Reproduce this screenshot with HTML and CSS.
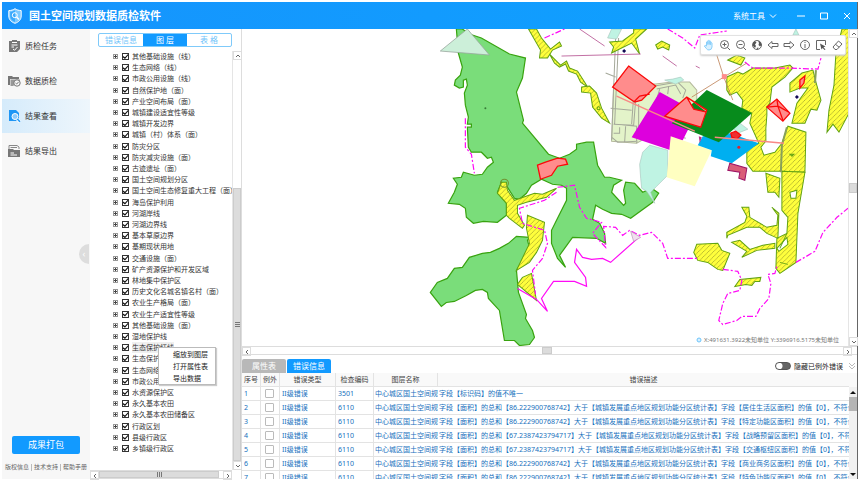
FILE: index.html
```html
<!DOCTYPE html>
<html lang="zh-CN">

<head>
    <meta charset="UTF-8">
    <meta name="viewport" content="width=device-width, initial-scale=1.0">
    <title>国土空间规划数据质检软件</title>
    <link rel="stylesheet" href="styles.css">
</head>

<body>
    <div class="app">
        <header class="titlebar">
            <svg class="logo" viewBox="0 0 14 16">
                <path d="M7 .7 C5.400 1.900 3.200 2.500 .8 2.600 V8 C.8 11.500 3 14 7 15.300 C11 14 13.200 11.500 13.200 8 V2.600 C10.800 2.500 8.600 1.900 7 .7Z" fill="#7cc9ff" stroke="#fff" />
                <path d="M7 2.200 C5.700 3.100 4 3.700 2.200 3.800 V8 C2.200 10.800 4 12.800 7 13.900Z" fill="#3aa9fb" />
                <circle cx="6.800" cy="7.200" r="2.500" fill="none" stroke="#fff" />
                <path d="M8.600 9 L11 11.500" stroke="#fff" stroke-width="1.400" />
            </svg>
            <h1>国土空间规划数据质检软件</h1>
            <button class="system-menu">系统工具
                <svg viewBox="0 0 8 8"><path d="M1 2.500 L4 5.500 L7 2.500" /></svg>
            </button>
            <div class="window-buttons">
                <button aria-label="最小化"><svg viewBox="0 0 10 10"><path d="M1 5 H9" /></svg></button>
                <button aria-label="最大化"><svg viewBox="0 0 10 10"><path d="M1.500 2 H8.500 V8 H1.500Z" /></svg></button>
                <button aria-label="关闭"><svg viewBox="0 0 10 10"><path d="M2 2 L8 8 M8 2 L2 8" /></svg></button>
            </div>
        </header>

        <div class="main">
            <aside class="sidebar">
                <nav>
                    <a href="#task">
                        <svg viewBox="0 0 13 14">
                            <path d="M1 2 H4 V1 H9 V2 H12 V10 L9 13 H1Z" fill="#777" />
                            <path d="M4 3.500 H9 M3.500 6 H9.500 M3.500 8 H6 M5 10 L6.500 11.300 L9.500 8" fill="none" stroke="#fff" />
                        </svg>
                        质检任务
                    </a>
                    <a href="#check">
                        <svg viewBox="0 0 13 14">
                            <path d="M0 2 H4 L5 3 H11 V5 H2 V11 H0Z" fill="#777" />
                            <path d="M2.500 5.500 H12 V7 H7 L5.500 12 H2.500Z" fill="#999" />
                            <circle cx="9" cy="9" r="3.200" fill="#f7f7f7" stroke="#777" />
                            <path d="M7.500 9 L8.700 10 L10.700 7.800" fill="none" stroke="#777" />
                        </svg>
                        数据质检
                    </a>
                    <a href="#result" class="active">
                        <svg viewBox="0 0 13 14">
                            <path d="M1 1 H8 L11 4 V12 H1Z" fill="#1e96f5" />
                            <circle cx="7" cy="7.500" r="3" fill="#8fcbfb" stroke="#fff" />
                            <path d="M9 10 L12 13" stroke="#fff" stroke-width="3" />
                            <path d="M9.300 10 L12 12.800" stroke="#1e96f5" stroke-width="1.500" />
                        </svg>
                        结果查看
                    </a>
                    <a href="#export">
                        <svg viewBox="0 0 13 14">
                            <path d="M1 5 V1.500 H9 L11 3 V5" fill="none" stroke="#888" />
                            <path d="M2.500 3.500 H9" stroke="#888" />
                            <path d="M0 5 H5 L6 6 H12 V13 H0Z" fill="#777" />
                            <path d="M2.500 9 H6 M2.500 11 H9" stroke="#fff" />
                        </svg>
                        结果导出
                    </a>
                </nav>
                <button class="collapse" aria-label="收起">‹</button>
                <div class="sidebar-bottom">
                    <button class="pack">成果打包</button>
                    <p class="links"><a href="#copyright">版权信息</a><i></i><a href="#support">技术支持</a><i></i><a href="#help">帮助手册</a></p>
                </div>
            </aside>

            <section class="layers">
                <div class="switch">
                    <button>错误信息</button>
                    <button class="active">图 层</button>
                    <button>表 格</button>
                </div>
                <div class="tree-area">
                    <ul class="tree" id="tree"></ul>
                    <div class="scroll vertical">
                        <button aria-label="向上"><svg viewBox="0 0 8 8"><path d="M2 5 L4 3 L6 5" /></svg></button>
                        <span class="track tree-track"><span class="thumb"><i></i></span></span>
                        <button aria-label="向下"><svg viewBox="0 0 8 8"><path d="M2 3 L4 5 L6 3" /></svg></button>
                    </div>
                </div>
                <div class="scroll horizontal tree-bottom">
                    <button aria-label="向左"><svg viewBox="0 0 8 8"><path d="M5 2 L3 4 L5 6" /></svg></button>
                    <span class="track"><span class="thumb"><i></i></span></span>
                    <button aria-label="向右"><svg viewBox="0 0 8 8"><path d="M3 2 L5 4 L3 6" /></svg></button>
                </div>
            </section>

            <section class="content">
                <div class="map-area">
                    <div class="map">
                        <svg class="map-canvas" viewBox="243 29 605 317" preserveAspectRatio="xMinYMin slice">
                            <defs>
                                <pattern id="hatch" width="5" height="5" patternUnits="userSpaceOnUse">
                                    <rect width="5" height="5" fill="#ffff3c" />
                                    <path d="M-1 1 L1 -1 M-1 6 L6 -1 M4 6 L6 4" stroke="#b0b02c" stroke-width=".8" />
                                </pattern>
                            </defs>

                            <!-- protected areas -->
                            <g class="area-green">
                                <path d="M457 29 L459 53 L463 67 L461 75 L456 80 L455 85 L460 88 L464 87 L464 80 L467 79 L468 85 L465 93 L466 105 L469 117 L468 124 H472 V127 H468 L469 147 L472 152 H482 L488 158 L492 157 L494 162 L488 167 L483 174 L475 175 L464 172 L462 177 L454 178 L458 184 L455 192 L449 203 L460 204 L466 208 L467 217 L474 223 L484 221 L498 222 L507 215 L507 203 L498 192 L502 182 L508 187 L515 198 L520 199 L527 193 L532 185 L542 179 L553 184 L562 185 L567 188 V200 L558 218 L552 230 V243 L558 258 L566 267 L560 255 L573 237 L597 238 L606 243 L605 233 L600 223 L593 219 L596 205 L603 209 L612 213 L622 214 L631 218 L653 202 L659 193 L652 188 L643 192 L635 183 L626 182 L624 190 L626 203 L624 205 L612 192 L614 185 L622 180 L610 177 H605 L598 165 L594 142 L587 142 L577 144 V149 L570 154 L560 158 L549 154 L523 123 L524 120 L517 92 L523 78 L526 58 L510 54 L482 38 L470 34 L463 29Z" />
                                <path d="M530 237 L517 236 L509 243 L500 248 L491 252 L483 253 L470 257 L463 267 L455 268 L448 278 L438 282 L431 292 L442 306 L447 302 L455 301 L467 295 L476 290 L483 289 L488 292 L489 298 L500 310 L505 340 H515 L520 345 L530 344 L535 337 L533 330 L526 318 L527 314 L519 292 L517 270 L530 247 L528 240Z" />
                            </g>
                            <circle cx="486" cy="108" r="1" fill="#387c38" />

                            <!-- town blocks and roads -->
                            <path d="M614 84 L656 84 L672 82 L690 82 L697 90 L697 108 L687 130 L672 138 L660 130 L637 143 L612 141Z" fill="#e3f3c9" stroke="#b5b99d" />
                            <g class="road">
                                <path d="M616 38 L612 140 M619 38 L615 124 L637 126 V143 M606 73 L616 77 M614 124 L634 125 L636 100 M611 108 L632 110 M626 126 L625 142 M614 133 H620 V127 M655 86 L678 82 L686 90 L683 98 M657 89 L676 85 L681 94 M639 104 V126 L658 124 M660 89 L657 99 M669 86 L668 94 M612 137 L618 142 L638 141 M668 124 V133 L686 138 M634 96 L632 124" />
                            </g>
                            <g fill="#bff3e3" stroke="#a5c2bb" stroke-width=".6">
                                <path d="M608 38 L612 29 H622 L617 39Z" />
                                <path d="M665 80 L673 79 L681 77 L684 80 L676 84Z" />
                                <path d="M650 145 L668 150 V175 L657 186 L651 192 L655 203 L647 191 L642 188 L641 178 L640 164 L643 152Z" />
                                <path d="M733 128 L740 123 L748 129 L738 133Z" />
                                <path d="M793 35 L796 29 L799 35Z" />
                            </g>
                            <path d="M468 29 L490 55 L441 51Z" fill="#ccefd9" stroke="#9aa79f" stroke-width=".8" />

                            <!-- farmland -->
                            <g class="area-yellow">
                                <path d="M502 182 L507 182 L508 190 L515 200 L535 193 L543 194 L557 188 L547 197 L527 202 L518 205 V213 L525 225 L523 228 L510 218 L507 215 V203 L498 193Z" />
                                <path d="M528 215 L545 222 L543 240 L537 252 L530 262 L517 270 L530 243 L527 228Z" />
                                <path d="M532 273 L537 300 L518 284 L523 277Z" />
                                <path d="M529 29 H537 L542 38 L551 49 L560 42 L562 46 L553 50 L548 58 H540 L541 50Z" />
                                <path d="M550 54 L557 61 L561 65 L567 61 L570 68 L578 71 L585 82 L588 87 L581 82 L577 74 L569 71 L566 64 L560 67 L555 63Z" />
                                <path d="M582 87 L590 86 L597 93 L602 108 L610 123 L602 118 L593 107 L591 93 L582 92Z" />
                                <path d="M610 42 L623 41 L634 33 V29 H647 L636 39 L640 54 L632 43 L620 49 L612 53 L614 47Z" />
                                <path d="M656 45 L662 41 L670 45 L669 50 L663 47 L658 49Z" />
                                <path d="M728 60 L737 55 L745 58 L741 65Z" />
                                <path d="M727 77 L738 72 L743 74 L753 68 L775 68 L790 65 L793 68 L785 77 L772 87 L770 103 L767 107 V115 L766 128 L766 141 L761 147 L764 155 L775 152 L782 143 L788 126 L806 132 L805 172 L782 171 L753 171 L747 163 V150 L759 143 L750 123 L752 113 L742 108 L743 100 L737 92 L730 95 L727 90Z" />
                                <path d="M790 83 L802 73 L813 70 L816 82 L821 100 L817 110 L811 109 L805 123 L792 123 L797 103 L808 88 L800 88 L790 92Z" />
                                <path d="M842 29 H849 V113 L839 132 L833 124 L827 132 L829 110 L834 85 L836 52Z" />
                                <path d="M782 171 L805 172 L798 213 L796 262 L780 273 L776 268 L777 238 L787 233 L788 217 L782 210Z" />
                                <path d="M766 173 L780 178 L779 197 L775 192 L768 192Z" />
                                <path d="M742 207 L749 207 L750 217 L767 227 L777 225 L778 215 L772 207 L779 213 L778 238 L767 233 L760 227 L747 227 L728 235 L727 238 V232 L745 222 L747 216Z" />
                                <path d="M732 242 L740 240 L750 249 L763 245 L775 243 V248 L757 250 L742 257 L747 251Z" />
                                <path d="M697 244 L718 243 L722 250 L730 253 L723 270 L718 269 L708 262 L698 260 L694 252Z" />
                                <path d="M735 286 L740 279 L761 277 L760 281 L755 281 L752 285 L746 284Z" />
                            </g>
                            <g fill="#fff" stroke="#62a312">
                                <path d="M790 192 L797 190 L796 198 L791 198Z" />
                                <path d="M777 248 L787 237 L788 244 L779 251Z" />
                                <path d="M780 248 L787 233" />
                            </g>
                            <path d="M787 127 L782 145 L781 172 M816 70 L815 83" fill="none" stroke="#88a05a" stroke-width="2" />
                            <path d="M792 156 L790 154 L794 154Z M780 262 L788 264" fill="none" stroke="#62a312" />
                            <circle cx="505" cy="183" r="4" fill="none" stroke="#719331" />
                            <circle cx="599" cy="108" r="1.500" fill="none" stroke="#62a312" />

                            <!-- administrative boundaries -->
                            <g class="boundary dashed">
                                <path d="M668 29 L683 38 L695 48 L700 35 L727 31" />
                                <path d="M745 62 L753 68 L787 68 L818 69 L821 58" />
                                <path d="M545 38 L565 29" />
                                <path d="M466 118 V147 L472 154 L475 173" />
                                <path d="M557 192 L545 200 L520 208 L523 223 L545 230 L548 243 L543 258 L533 270 L536 294" />
                                <path d="M558 187 L575 185 L580 207 L587 218 L602 222 L593 233 L606 247 L604 226 L616 227 L623 235 L630 230 L640 235 L652 232 L663 243 L668 258 H698" />
                                <path d="M723 269 L738 271 L742 280 L740 290 L728 293 L723 303 L719 320 L723 324 L737 320 L742 316 H756 L760 308 L769 298 L771 283 L768 274 L775 273 L777 266" />
                                <path d="M796 262 L815 251 L823 232 L837 217 L848 208" />
                            </g>
                            <path class="boundary" d="M518 288 L537 299 L548 311 L542 298 L554 281 H575 L587 286 L586 277 L575 262 L577 249 L583 257 L592 259 L603 258 L611 262 L638 238" />
                            <path d="M631 231 L641 237 L634 241Z" fill="#f1dfef" stroke="#b89ab5" stroke-width=".7" />
                            <g fill="none" stroke="#b34c8d" stroke-width=".8">
                                <path d="M562 56 L641 54 M580 29 L605 46 M663 56 L677 66 M696 66 L700 68" />
                                <path d="M724 77 L717 55 M724 77 L747 63 M724 77 L692 97 M724 77 L733 100" stroke="#bd8054" />
                            </g>

                            <!-- planning zones -->
                            <path d="M660 92 L697 112 L688 130 L683 140 L671 150 L632 137Z" fill="#dd00dd" />
                            <path d="M671 136 L712 150 L695 186 L667 177Z" fill="#ffffc1" />
                            <path d="M730 133 L759 143 L732 163 L711 156 L712 150 L698 145 L703 136Z" fill="#00aff0" />
                            <path d="M707 90 L752 113 L719 142 L672 123Z" fill="#078b1c" />
                            <path d="M730 163 L747 168 L745 180 L739 178 L740 172 L728 170Z" fill="#d95d78" stroke="#9c1265" />
                            <path d="M699 136 L702 137 L700 143Z" fill="#b93484" />

                            <!-- error features -->
                            <g class="area-red">
                                <path d="M629 66 L656 86 L642 100 L635 102 L613 87Z M634 102 L640 96 L650 94" />
                                <path d="M687 97 L707 110 L701 127 L665 116Z M687 97 L694 109 L707 112" />
                                <path d="M777 99 L790 113 L783 121 L767 107Z" />
                                <path d="M777 99 L778 106 L789 112 M767 107 L778 106 L783 120" fill="none" />
                                <path d="M800 80 L805 76 L804 83 L800 88Z" />
                                <path d="M538 165 L546 162 L558 158 L566 159 L568 164 L558 166 L552 175 L541 179Z" />
                                <path d="M731 133 L736 131 L741 135 L737 139 L732 137Z" fill="#ef3030" />
                            </g>
                            <circle cx="739" cy="147" r="1.500" fill="#e2212c" />
                            <rect x="722" y="74" width="5" height="5" fill="#ff8d8d" />
                            <path d="M617 96 L695 131 M715 137 L784 143" stroke="#f88885" stroke-width="1.500" />
                            <path d="M624.500 49 L626.500 51 L624.500 53 L622.500 51Z M797 95 L799 97 L797 99 L795 97Z" fill="#120a55" />
                        </svg>

                        <div class="map-tools">
                            <button class="active" aria-label="平移"><svg viewBox="0 0 12 12"><path d="M3.500 7 V3 Q4.200 2 4.800 3 V5.500 V1.800 Q5.500 1 6.200 1.800 V5.500 V2 Q7 1.300 7.600 2.200 V5.800 V3.500 Q8.500 3 9 4 V8 Q8.700 11 6 11 Q4.300 11 3.300 9.500 L1.300 7 Q2 5.800 3.500 7Z" /></svg></button>
                            <button aria-label="放大"><svg viewBox="0 0 12 12"><circle cx="5.500" cy="5.500" r="4" /><path d="M8.500 8.500 L11 11 M3.500 5.500 H7.500 M5.500 3.500 V7.500" /></svg></button>
                            <button aria-label="缩小"><svg viewBox="0 0 12 12"><circle cx="5.500" cy="5.500" r="4" /><path d="M8.500 8.500 L11 11 M3.500 5.500 H7.500" /></svg></button>
                            <button aria-label="全图"><svg viewBox="0 0 12 12"><circle cx="6" cy="6" r="4.500" /><path class="solid" d="M2 3.500 L4 2 L5.500 3.500 L4 5.500 L5 7 L4 9 L2 7Z M7 1.800 L9.500 3 L10.500 6 L9 7.500 L7.500 6 L8 4Z M5.500 9 L7.500 8.500 L7 10.500Z" /></svg></button>
                            <button aria-label="后退"><svg viewBox="0 0 12 12"><path d="M1 6 L5 2.500 V4.500 H11 V7.500 H5 V9.500Z" /></svg></button>
                            <button aria-label="前进"><svg viewBox="0 0 12 12"><path d="M11 6 L7 2.500 V4.500 H1 V7.500 H7 V9.500Z" /></svg></button>
                            <button aria-label="属性"><svg viewBox="0 0 12 12"><circle cx="6" cy="6" r="4.500" /><path d="M6 3 V4 M6 5 V9" /></svg></button>
                            <button aria-label="选择"><svg viewBox="0 0 12 12"><path d="M5 10.500 H1.500 V1.500 H10.500 V6" /><path class="solid" d="M5 4.500 L10.500 7.500 L8.500 8.200 L10.500 10.500 L9.500 11 L7.700 9 L6.500 10.500Z" /></svg></button>
                            <button aria-label="清除"><svg viewBox="0 0 12 12"><path d="M2 8 L7.500 2 L11 5 L6 10.500 H4Z M4.500 5.300 L8.200 8.300" /></svg></button>
                        </div>

                        <p class="coords"><svg viewBox="0 0 6 6"><circle cx="3" cy="3" r="2" fill="#d8f0ff" stroke="#6dc4fa" stroke-width="1" /></svg>X:491631.3922未知单位 Y:3396916.5175未知单位</p>
                    </div>
                    <div class="scroll vertical">
                        <button aria-label="向上"><svg viewBox="0 0 8 8"><path d="M2 5 L4 3 L6 5" /></svg></button>
                        <span class="track map-track"><span class="thumb"></span></span>
                        <button aria-label="向下"><svg viewBox="0 0 8 8"><path d="M2 3 L4 5 L6 3" /></svg></button>
                    </div>
                </div>
                <div class="scroll horizontal map-bottom">
                    <button aria-label="向左"><svg viewBox="0 0 8 8"><path d="M5 2 L3 4 L5 6" /></svg></button>
                    <span class="track"><span class="thumb"></span></span>
                    <button aria-label="向右"><svg viewBox="0 0 8 8"><path d="M3 2 L5 4 L3 6" /></svg></button>
                </div>

                <div class="errors">
                    <div class="error-tabs">
                        <button>属性表</button>
                        <button class="active">错误信息</button>
                        <label class="toggle"><input type="checkbox">隐藏已例外错误</label>
                        <button class="fold" aria-label="折叠"><svg viewBox="0 0 8 8"><path d="M1 1 L4 4 L7 1 M1 4 L4 7 L7 4" /></svg></button>
                    </div>
                    <div class="error-table">
                        <div class="table-wrap">
                            <table>
                                <colgroup>
                                    <col class="col-no">
                                    <col class="col-no">
                                    <col class="col-type">
                                    <col class="col-code">
                                    <col class="col-layer">
                                    <col>
                                </colgroup>
                                <thead>
                                    <tr>
                                        <th>序号</th>
                                        <th>例外</th>
                                        <th>错误类型</th>
                                        <th>检查编码</th>
                                        <th>图层名称</th>
                                        <th>错误描述</th>
                                    </tr>
                                </thead>
                                <tbody id="error-rows"></tbody>
                            </table>
                        </div>
                        <div class="table-scroll">
                            <button aria-label="向上"><svg viewBox="0 0 8 8"><path d="M1 6 L4 3 L7 6Z" /></svg></button>
                            <span class="thumb"></span>
                            <button aria-label="向下"><svg viewBox="0 0 8 8"><path d="M1 2 L4 5 L7 2Z" /></svg></button>
                        </div>
                    </div>
                </div>
            </section>
        </div>
    </div>

    <script src="script.js"></script>
</body>

</html>
```

FILE: styles.css
```css
* {
    box-sizing: border-box;
}

body {
    margin: 0;
    padding: 2px;
    height: 100vh;
    overflow: hidden;
    background: #fff;
    color: #333;
    font-family: "Noto Sans", "Noto Sans CJK SC", sans-serif;
    font-size: 7px;
}

button {
    margin: 0;
    padding: 0;
    border: none;
    background: none;
    color: inherit;
    font: inherit;
    cursor: pointer;
}

svg {
    display: block;
    fill: none;
}

a {
    color: inherit;
    text-decoration: none;
}

ul,
p,
h1 {
    margin: 0;
    padding: 0;
}

.app {
    display: flex;
    flex-direction: column;
    height: 100%;
    border-right: 1px solid #666;
}

/* title bar */
.titlebar {
    display: flex;
    align-items: center;
    height: 27px;
    flex: none;
    padding: 0 5px 0 6px;
    color: #fff;
    background: linear-gradient(to right, #1694fd, #0ea2ff);
}

.logo {
    width: 14px;
    height: 16px;
    margin-right: 7px;
}

.titlebar h1 {
    flex: 1;
    font-size: 11px;
    line-height: 16px;
}

.system-menu {
    display: flex;
    align-items: center;
    gap: 4px;
    margin-right: 19px;
    font-size: 8px;
}

.system-menu svg {
    width: 8px;
    height: 8px;
    stroke: #fff;
}

.window-buttons {
    display: flex;
    gap: 13px;
}

.window-buttons svg {
    width: 10px;
    height: 10px;
    stroke: #fff;
}

.main {
    flex: 1;
    display: flex;
    min-height: 0;
}

/* left menu */
.sidebar {
    position: relative;
    width: 88px;
    flex: none;
    display: flex;
    flex-direction: column;
    justify-content: space-between;
    background: #f7f7f7;
}

.sidebar nav {
    display: grid;
    gap: 1px;
}

.sidebar nav a {
    display: flex;
    align-items: center;
    gap: 4px;
    height: 34px;
    padding-left: 6px;
    font-size: 8px;
    line-height: 10px;
}

.sidebar nav a.active {
    background: linear-gradient(to right, #d5ebfb, #eef6fc);
}

.sidebar nav svg {
    width: 13px;
    height: 14px;
}

.collapse {
    position: absolute;
    top: 215px;
    right: 1px;
    width: 10px;
    height: 20px;
    border-radius: 10px 0 0 10px;
    background: #ddd;
    color: #fff;
    font-size: 9px;
    line-height: 18px;
}

.sidebar-bottom {
    padding-bottom: 8px;
}

.pack {
    display: block;
    width: 68px;
    height: 18px;
    margin: 0 auto 9px;
    border-radius: 2px;
    background: #129aff;
    color: #fff;
    font-size: 9px;
    line-height: 18px;
}

.links {
    display: flex;
    align-items: center;
    justify-content: center;
    gap: 2px;
    color: #666;
    font-size: 6px;
    line-height: 8px;
}

.links i {
    width: 1px;
    height: 7px;
    background: #bbb;
}

/* layer tree */
.layers {
    width: 152px;
    flex: none;
    display: flex;
    flex-direction: column;
    border-right: 1px solid #ddd;
}

.switch {
    display: flex;
    height: 14px;
    margin: 4px 9px 4px 8px;
    border: 1px solid #7fcafa;
    border-radius: 2px;
    color: #6fc4fa;
    overflow: hidden;
}

.switch button {
    flex: 1;
    font-size: 8px;
    line-height: 12px;
}

.switch button.active {
    background: #129aff;
    color: #fff;
}

.tree-area {
    flex: 1;
    display: flex;
    min-height: 0;
}

.tree {
    flex: 1;
    min-width: 0;
    display: grid;
    grid-auto-rows: 1fr;
    padding-bottom: 16px;
    list-style: none;
}

.tree li {
    position: relative;
    display: flex;
    align-items: center;
    min-height: 0;
    min-width: 0;
    padding-left: 23px;
}

.expand {
    width: 5px;
    height: 5px;
    flex: none;
    margin-right: 4px;
    border: 1px solid #999;
    background: linear-gradient(#444, #444) center / 3px 1px no-repeat, linear-gradient(#444, #444) center / 1px 3px no-repeat;
}

.tree label {
    display: flex;
    align-items: center;
    gap: 3px;
    min-width: 0;
}

.tree label span {
    overflow: hidden;
    line-height: 11px;
    white-space: nowrap;
}

.tree li.selected span {
    background: #f0f0f0;
}

.tree input {
    appearance: none;
    width: 7px;
    height: 7px;
    flex: none;
    margin: 0;
    border: 1px solid #333;
    background: #fff;
}

.tree input:checked::before {
    content: "";
    display: block;
    width: 5px;
    height: 5px;
    background: #111;
    clip-path: polygon(0 40%, 40% 65%, 100% 0, 100% 30%, 40% 100%, 0 70%);
}

.context-menu {
    position: absolute;
    z-index: 2;
    left: 68px;
    top: 5px;
    width: 58px;
    display: grid;
    border: 1px solid #bbb;
    background: #fff;
    box-shadow: 1px 1px 1px #ccc;
}

.context-menu button {
    height: 12px;
    padding-left: 14px;
    color: #222;
    line-height: 11px;
    text-align: left;
}

/* scroll bars */
.scroll {
    display: flex;
    flex: none;
    background: #fff;
}

.scroll button {
    display: grid;
    place-items: center;
    width: 9px;
    height: 9px;
    border: 1px solid #ddd;
}

.scroll svg {
    width: 8px;
    height: 8px;
    stroke: #666;
}

.scroll.vertical {
    flex-direction: column;
    width: 9px;
    border-left: 1px solid #e5e5e5;
}

.scroll.horizontal {
    height: 9px;
    border-top: 1px solid #ddd;
    border-bottom: 1px solid #ddd;
}

.scroll .track {
    flex: 1;
    display: flex;
}

.scroll .thumb {
    display: grid;
    place-items: center;
    min-width: 8px;
    min-height: 7px;
    border: 1px solid #ccc;
    background: #dcdcdc;
}

.tree-track {
    align-items: flex-end;
}

.tree-track .thumb {
    height: 68%;
}

.thumb i {
    width: 5px;
    height: 5px;
    background: repeating-linear-gradient(#777 0 1px, #dcdcdc 1px 2px);
}

.tree-bottom {
    margin-right: 9px;
}

.tree-bottom .thumb {
    width: 97%;
}

.tree-bottom .thumb i {
    background: repeating-linear-gradient(to right, #777 0 1px, #dcdcdc 1px 2px);
}

.map-track {
    align-items: center;
}

.map-track .thumb {
    height: 10px;
}

.map-bottom .track {
    justify-content: center;
}

.map-bottom .thumb {
    width: 10px;
}

.map-bottom {
    padding-right: 5px;
}

/* map */
.content {
    flex: 1;
    display: flex;
    flex-direction: column;
    min-width: 0;
}

.map-area {
    flex: 1;
    display: flex;
    min-height: 0;
}

.map {
    position: relative;
    flex: 1;
    min-width: 0;
    overflow: hidden;
}

.map-canvas {
    width: 100%;
    height: 100%;
}

.area-green {
    fill: #7add7a;
    stroke: #38a30f;
    stroke-width: 1.2;
}

.area-yellow {
    fill: url(#hatch);
    stroke: #62a312;
    stroke-width: 1;
}

.area-red {
    fill: #ff8c8c;
    stroke: #fa0909;
    stroke-width: 1.3;
}

.road {
    stroke: #a5a99a;
    stroke-width: 1;
}

.boundary {
    stroke: #ff0af6;
    stroke-width: 1.2;
}

.dashed {
    stroke-dasharray: 6 2 2 2;
}

.map-tools {
    position: absolute;
    top: 6px;
    right: 2px;
    display: flex;
    height: 20px;
    border: 1px solid #e2e2e2;
    border-radius: 2px;
    background: #fff;
    box-shadow: 0 1px 2px #ccc;
}

.map-tools button {
    display: grid;
    place-items: center;
    width: 16px;
}

.map-tools svg {
    width: 12px;
    height: 12px;
    stroke: #666;
}

.map-tools .active svg {
    fill: #d9f1ff;
    stroke: #8acffa;
}

.map-tools .solid {
    fill: #555;
    stroke: none;
}

.coords {
    position: absolute;
    right: 9px;
    bottom: 1px;
    display: flex;
    align-items: center;
    gap: 2px;
    color: #777;
    font-size: 6px;
    line-height: 10px;
}

.coords svg {
    width: 6px;
    height: 6px;
}

/* error list */
.errors {
    height: 124px;
    flex: none;
    display: flex;
    flex-direction: column;
    padding-top: 4px;
}

.error-tabs {
    display: flex;
    align-items: flex-end;
    gap: 1px;
    height: 14px;
    flex: none;
}

.error-tabs > button:not(.fold) {
    width: 44px;
    height: 14px;
    border-radius: 2px 2px 0 0;
    background: #b8b8b8;
    color: #fff;
    font-size: 8px;
    line-height: 14px;
}

.error-tabs > button.active:not(.fold) {
    background: #129aff;
}

.toggle {
    display: flex;
    align-items: center;
    gap: 3px;
    height: 14px;
    margin-left: auto;
    color: #222;
}

.toggle input {
    appearance: none;
    width: 16px;
    height: 8px;
    margin: 0;
    border: 1px solid #555;
    border-radius: 4px;
    background: radial-gradient(circle at 3px 3px, #fff 3px, #666 4px);
}

.fold {
    height: 14px;
    margin: 0 1px 0 4px;
}

.fold svg {
    width: 8px;
    height: 8px;
    stroke: #bbb;
}

.error-table {
    flex: 1;
    display: flex;
    min-height: 0;
    overflow: hidden;
}

.table-wrap {
    flex: 1;
    min-width: 0;
    overflow: hidden;
}

table {
    width: 100%;
    table-layout: fixed;
    border-collapse: separate;
    border-spacing: 0;
}

.col-no {
    width: 19px;
}

.col-type {
    width: 56px;
}

.col-code {
    width: 38px;
}

.col-layer {
    width: 64px;
}

th,
td {
    height: 14px;
    padding: 0 0 0 2px;
    border-right: 1px solid #e3e3e3;
    border-bottom: 1px solid #e3e3e3;
    overflow: hidden;
    line-height: 12px;
    text-align: left;
    white-space: nowrap;
}

td:nth-child(5),
td:nth-child(6) {
    padding-left: 1px;
}

td:nth-child(5) {
    border-right: none;
}

th {
    padding: 0;
    background: #f9f9f9;
    color: #444;
    font-weight: normal;
    text-align: center;
}

th:last-child,
td:last-child {
    border-right: none;
}

td {
    color: #1670bd;
}

td input {
    appearance: none;
    display: block;
    width: 9px;
    height: 9px;
    margin: 0 0 0 2px;
    border: 1px solid #bbb;
    border-radius: 1px;
    background: #fff;
}

.table-scroll {
    width: 8px;
    flex: none;
    display: flex;
    flex-direction: column;
    padding-top: 15px;
    background: linear-gradient(#f9f9f9 14px, #f1f1f1 14px);
}

.table-scroll svg {
    width: 8px;
    height: 8px;
    fill: #111;
}

.table-scroll .thumb {
    height: 14px;
    margin: 1px 0 auto;
    background: #b5b5b5;
}
```

FILE: script.js
```javascript
const layers = [
    "其他基础设施（线）", "生态网络（线）", "市政公用设施（线）", "自然保护地（面）",
    "产业空间布局（面）", "城镇建设适宜性等级", "城镇开发边界", "城镇（村）体系（面）",
    "防灾分区", "防灾减灾设施（面）", "古迹遗址（面）", "国土空间规划分区",
    "国土空间生态修复重大工程（面）", "海岛保护利用", "河湖岸线", "河湖边界线",
    "基本草原边界", "基期现状用地", "交通设施（面）", "矿产资源保护和开发区域",
    "林地集中保护区", "历史文化名城名镇名村（面）", "农业生产格局（面）", "农业生产适宜性等级",
    "其他基础设施（面）", "湿地保护线", "生态保护红线", "生态保护区",
    "生态网络（面）", "市政公用设施", "水资源保护区", "永久基本农田",
    "永久基本农田储备区", "行政区划", "县级行政区", "乡镇级行政区"
];
const selected = "生态保护红线";

const menu = `<div class="context-menu">
    <button>缩放到图层</button>
    <button>打开属性表</button>
    <button>导出数据</button>
</div>`;

document.getElementById("tree").innerHTML = layers.map((name, i) => `
    <li class="${name === selected ? "selected" : ""}">
        <button class="expand" aria-label="展开"></button>
        <label for="layer-${i}"><input type="checkbox" id="layer-${i}" checked><span>${name}</span></label>
        ${name === selected ? menu : ""}
    </li>`).join("");

function sumError(total, area) {
    return `字段【面积】的总和【${total}】大于【城镇发展重点地区规划功能分区统计表】字段【${area}】的值【0】，不符合图`;
}

const errors = [
    ["3501", "字段【标识码】的值不唯一"],
    ["6110", sumError("86.222900768742", "居住生活区面积")],
    ["6110", sumError("86.222900768742", "特定功能区面积")],
    ["6110", sumError("67.2387423794717", "战略预留区面积")],
    ["6110", sumError("67.2387423794717", "交通枢纽区面积")],
    ["6110", sumError("86.222900768742", "商业商务区面积")],
    ["6110", sumError("86.222900768742", "特色功能区面积")]
];

document.getElementById("error-rows").innerHTML = errors.map(([code, text], i) => `
    <tr>
        <td>${i + 1}</td>
        <td><input type="checkbox" aria-label="例外 ${i + 1}"></td>
        <td>II级错误</td>
        <td>${code}</td>
        <td>中心城区国土空间规</td>
        <td>${text}</td>
    </tr>`).join("");
```
